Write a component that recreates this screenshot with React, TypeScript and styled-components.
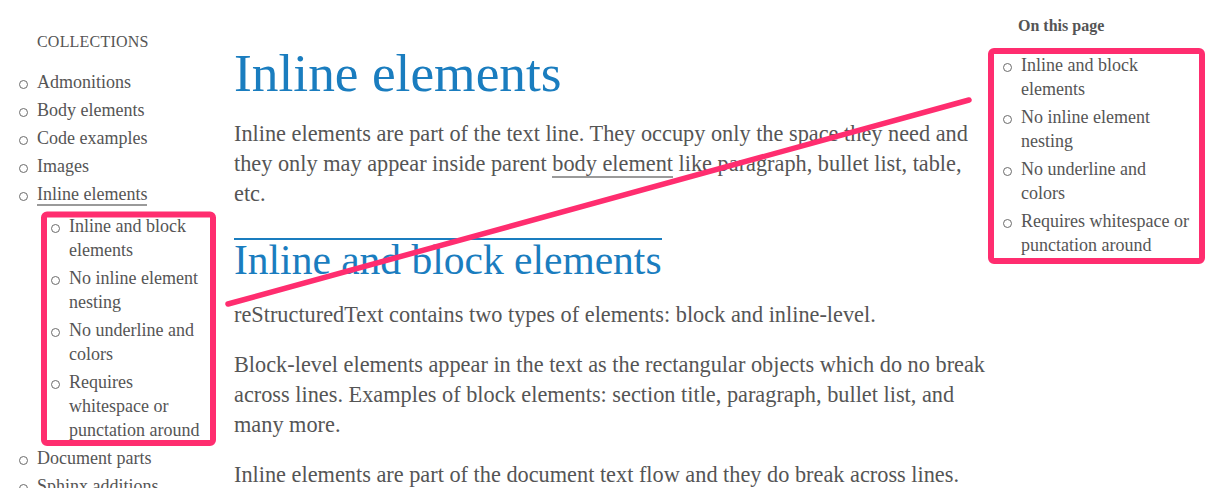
import React from "react";
import styled, { createGlobalStyle } from "styled-components";

const Global = createGlobalStyle`
  html, body { margin: 0; padding: 0; overflow: hidden; background: #fff; }
  body { font-family: "Liberation Serif", "Times New Roman", serif; color: #555; }
  * { box-sizing: border-box; }
`;

const Page = styled.div`
  position: relative;
  display: grid;
  grid-template-columns: 234px 756px 1fr;
  align-items: start;
  width: 1219px;
  height: 488px;
  overflow: hidden;
`;

const Sidebar = styled.nav`
  width: 210px;
  padding-top: 30px;
`;

const SideTitle = styled.div`
  padding-left: 37px;
  font-size: 16px;
  line-height: 24px;
  letter-spacing: 0.2px;
  text-transform: uppercase;
  color: #555;
`;

const List = styled.ul<{ $indent: number; $top: number }>`
  list-style: none;
  display: flex;
  flex-direction: column;
  gap: 4px;
  margin: ${(p) => p.$top}px 0 0;
  padding: 0 0 0 ${(p) => p.$indent}px;
`;

const Item = styled.li`
  position: relative;
  font-size: 18px;
  line-height: 24px;
  color: #555;
  &::before {
    content: "";
    position: absolute;
    left: -18px;
    top: 10px;
    width: 7px;
    height: 7px;
    border: 1.3px solid #6b6b6b;
    border-radius: 50%;
  }
`;

const SideLink = styled.a<{ $current?: boolean }>`
  color: inherit;
  text-decoration: none;
  border-bottom: ${(p) => (p.$current ? "2px solid #9a9a9a" : "none")};
`;

const Main = styled.main`
  padding-top: 41px;
`;

const H1 = styled.h1`
  margin: 0;
  font-size: 53.4px;
  line-height: 64px;
  font-weight: 400;
  color: #1a7dbf;
`;

const Para = styled.p<{ $top?: number }>`
  margin: ${(p) => p.$top ?? 20}px 0 0;
  font-size: 22.3px;
  line-height: 30px;
  color: #555;
`;

const InlineLink = styled.a`
  color: inherit;
  text-decoration: none;
  border-bottom: 2px solid #9a9a9a;
`;

const H2 = styled.h2`
  width: fit-content;
  margin: 29px 0 0;
  padding: 0;
  border-top: 2px solid #1a7dbf;
  font-size: 41.5px;
  line-height: 40px;
  font-weight: 400;
  color: #1a7dbf;
`;

const Toc = styled.aside`
  margin-left: 10px;
  padding-top: 14px;
`;

const TocTitle = styled.div`
  padding-left: 18px;
  font-size: 16px;
  line-height: 24px;
  font-weight: 700;
  color: #555;
`;

const TocList = styled(List)`
  width: 192px;
`;

const Overlay = styled.svg`
  position: absolute;
  left: 0;
  top: 0;
  pointer-events: none;
`;

const nested = [
  "Inline and block elements",
  "No inline element nesting",
  "No underline and colors",
  "Requires whitespace or punctation around",
];

export default function App() {
  return (
    <>
      <Global />
      <Page>
        <Sidebar>
          <SideTitle>Collections</SideTitle>
          <List $indent={37} $top={16}>
            <Item><SideLink>Admonitions</SideLink></Item>
            <Item><SideLink>Body elements</SideLink></Item>
            <Item><SideLink>Code examples</SideLink></Item>
            <Item><SideLink>Images</SideLink></Item>
            <Item>
              <SideLink $current>Inline elements</SideLink>
              <List $indent={32} $top={8}>
                {nested.map((t) => (
                  <Item key={t}>{t}</Item>
                ))}
              </List>
            </Item>
            <Item><SideLink>Document parts</SideLink></Item>
            <Item><SideLink>Sphinx additions</SideLink></Item>
          </List>
        </Sidebar>
        <Main>
          <H1>Inline elements</H1>
          <Para $top={14}>
            Inline elements are part of the text line. They occupy only the space they need and
            they only may appear inside parent <InlineLink>body element</InlineLink> like paragraph,
            bullet list, table, etc.
          </Para>
          <H2>Inline and block elements</H2>
          <Para $top={20}>reStructuredText contains two types of elements: block and inline-level.</Para>
          <Para>
            Block-level elements appear in the text as the rectangular objects which do no break
            across lines. Examples of block elements: section title, paragraph, bullet list, and
            many more.
          </Para>
          <Para>
            Inline elements are part of the document text flow and they do break across lines.
          </Para>
        </Main>
        <Toc>
          <TocTitle>On this page</TocTitle>
          <TocList $indent={21} $top={15}>
            {nested.map((t) => (
              <Item key={t}>{t}</Item>
            ))}
          </TocList>
        </Toc>
        <Overlay width="1219" height="488" viewBox="0 0 1219 488">
          <rect x="44" y="214.5" width="169" height="228.5" rx="3" fill="none" stroke="#ff2d6f" strokeWidth="6" />
          <rect x="991" y="51" width="211" height="210" rx="3" fill="none" stroke="#ff2d6f" strokeWidth="6" />
          <line x1="228" y1="304" x2="969" y2="100" stroke="#ff2d6f" strokeWidth="5.5" strokeLinecap="round" />
        </Overlay>
      </Page>
    </>
  );
}
